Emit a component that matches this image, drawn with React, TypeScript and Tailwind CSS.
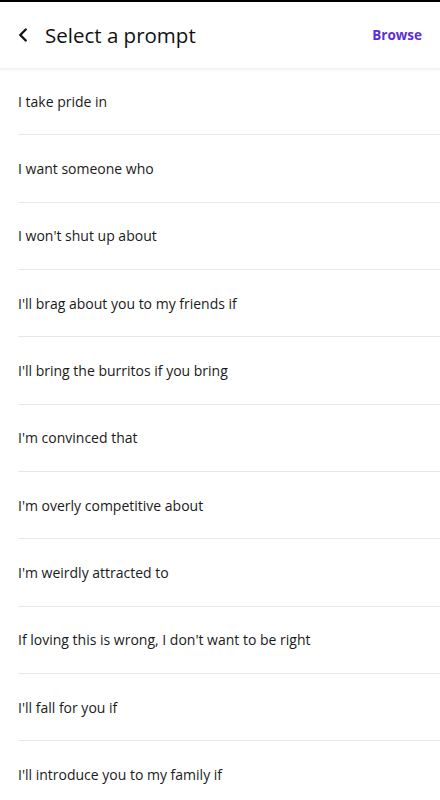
import { ChevronLeft } from 'lucide-react';

const prompts = [
  'I take pride in',
  'I want someone who',
  "I won't shut up about",
  "I'll brag about you to my friends if",
  "I'll bring the burritos if you bring",
  "I'm convinced that",
  "I'm overly competitive about",
  "I'm weirdly attracted to",
  "If loving this is wrong, I don't want to be right",
  "I'll fall for you if",
  "I'll introduce you to my family if",
];

export default function App() {
  return (
    <div className="h-[800px] w-[440px] overflow-hidden bg-white text-[#1a1a1a]" style={{ fontFamily: '"Open Sans", "Noto Sans", sans-serif' }}>
      <div className="h-[2px] bg-black" />
      {/* header */}
      <header className="relative z-10 flex h-[66px] items-center justify-between pl-[12px] pr-[18px] shadow-[0_2px_2px_rgba(0,0,0,0.06)]">
        <div className="flex items-center gap-[11px]">
          <ChevronLeft size={22} strokeWidth={2.6} className="text-[#111]" />
          <h1 className="text-[20.5px] font-medium text-[#111]">Select a prompt</h1>
        </div>
        <button className="text-[13.5px] font-bold text-[#5b2fd6]">Browse</button>
      </header>

      <ul className="pl-[18px]">
        {prompts.map(p => (
          <li key={p} className="box-border flex h-[67.33px] items-center border-b border-[#e6e6e6] text-[14px]">
            {p}
          </li>
        ))}
      </ul>
    </div>
  );
}
